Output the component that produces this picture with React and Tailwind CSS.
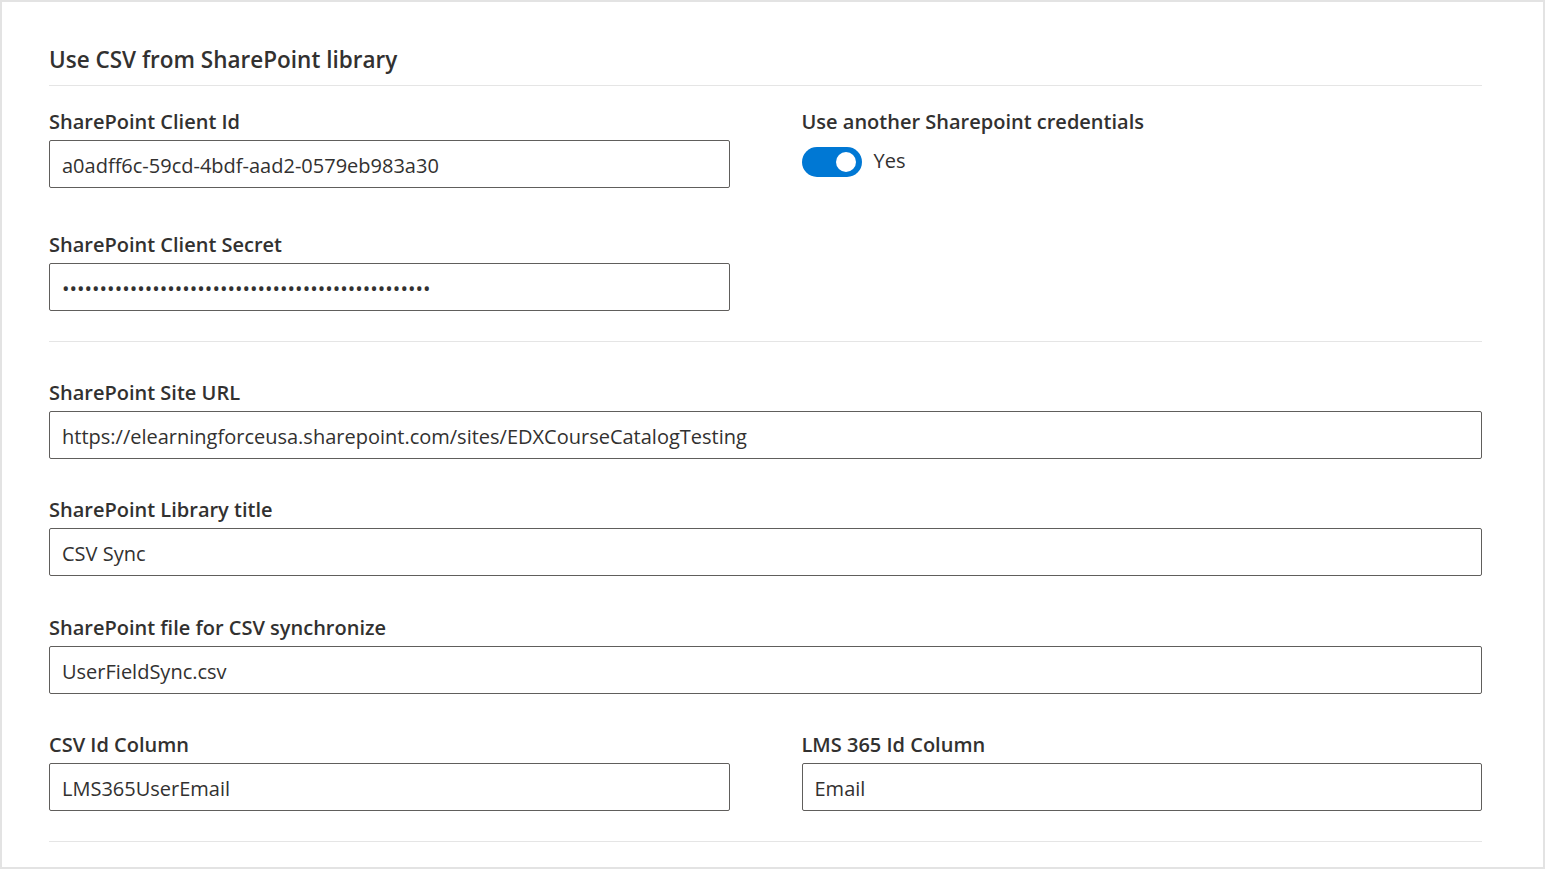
import React, { useState } from "react";

const font = { fontFamily: '"Open Sans", "Noto Sans", sans-serif' };

const Field = ({ label, value, type = "text", className = "" }) => (
  <div className={`flex flex-col ${className}`}>
    <label className="text-[20px] leading-[28px] font-[550] text-[#323130] mb-[4px]">
      {label}
    </label>
    <input
      readOnly
      type={type}
      value={value}
      className="h-[48px] w-full rounded-[2px] border border-[#605e5c] bg-white px-[12px] pt-[3px] text-[20px] text-[#323130] outline-none"
    />
  </div>
);

const App = () => {
  const [useOther, setUseOther] = useState(true);

  return (
    <div
      style={font}
      className="h-[869px] w-full border-2 border-[#e3e3e3] bg-white pl-[47px] text-[#323130]"
    >
      <div className="w-[1433px]">
        <div className="pt-[43px] pb-[10px] border-b border-[#e5e5e5]">
          <h2 className="text-[22.5px] leading-[30px] font-[550] text-[#323130]">
            Use CSV from SharePoint library
          </h2>
        </div>

        {/* Credentials */}
        <div className="grid grid-cols-2 gap-x-[72px] pt-[22px] pb-[30px] border-b border-[#e5e5e5]">
          <div className="flex flex-col">
            <Field label="SharePoint Client Id" value="a0adff6c-59cd-4bdf-aad2-0579eb983a30" />
            <Field
              className="mt-[43px]"
              label="SharePoint Client Secret"
              type="password"
              value="supersecretvalueforsharepointclient0123456789abcd"
            />
          </div>
          <div className="flex flex-col">
            <span className="text-[20px] leading-[28px] font-[550] text-[#323130]">
              Use another Sharepoint credentials
            </span>
            <div className="mt-[11px] flex items-center gap-[12px]">
              <button
                type="button"
                onClick={() => setUseOther(!useOther)}
                className={`flex h-[30px] w-[60px] items-center rounded-full px-[6px] ${
                  useOther ? "bg-[#0078d4] justify-end" : "bg-white border border-[#605e5c] justify-start"
                }`}
              >
                <span className="block h-[20px] w-[20px] rounded-full bg-white" />
              </button>
              <span className="text-[20px] leading-[28px] text-[#323130] -mt-[2px]">
                {useOther ? "Yes" : "No"}
              </span>
            </div>
          </div>
        </div>

        {/* Library */}
        <div className="flex flex-col pt-[37px] pb-[30px] border-b border-[#e5e5e5]">
          <Field
            label="SharePoint Site URL"
            value="https://elearningforceusa.sharepoint.com/sites/EDXCourseCatalogTesting"
          />
          <Field className="mt-[37px]" label="SharePoint Library title" value="CSV Sync" />
          <Field className="mt-[38px]" label="SharePoint file for CSV synchronize" value="UserFieldSync.csv" />
          <div className="mt-[37px] grid grid-cols-2 gap-x-[72px]">
            <Field label="CSV Id Column" value="LMS365UserEmail" />
            <Field label="LMS 365 Id Column" value="Email" />
          </div>
        </div>
      </div>
    </div>
  );
};

export default App;
